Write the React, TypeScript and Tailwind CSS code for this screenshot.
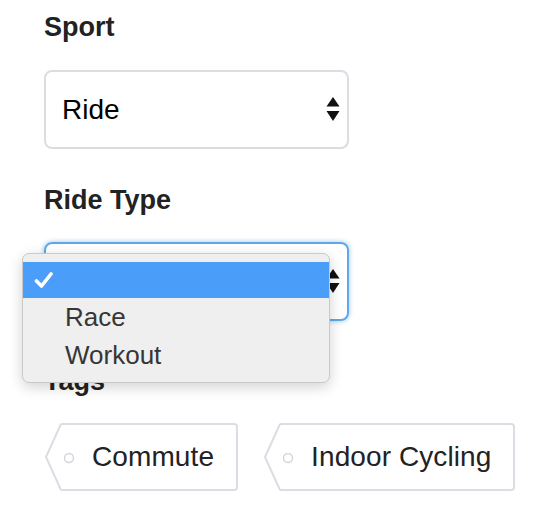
import React from 'react';

const font = { fontFamily: '"Liberation Sans", Arial, sans-serif' };

// Native-looking up/down select arrows
const SelectArrows: React.FC = () => (
  <svg width="14" height="25" viewBox="0 0 14 25" className="shrink-0">
    <path d="M7 0 L13.5 9.5 H0.5 Z" fill="#111" />
    <path d="M0.5 14 H13.5 L7 24 Z" fill="#111" />
  </svg>
);

const TagChip: React.FC<{ label: string }> = ({ label }) => (
  <div className="flex h-[68px] items-stretch">
    <svg width="18" height="68" viewBox="0 0 18 68" className="shrink-0">
      <path d="M18 1 H17 Q16 1 15.5 2 L1 34 L15.5 66 Q16 67 17 67 H18" fill="none" stroke="#dcdce4" strokeWidth="2" />
    </svg>
    <div className="relative flex items-center rounded-r-[4px] border-y-2 border-r-2 border-[#dcdce4] pl-[29px] pr-[22px] text-[28px] tracking-[0.1px] text-[#222]">
      <svg width="12" height="12" viewBox="0 0 12 12" className="absolute left-[1px] top-[28px]">
        <circle cx="5" cy="5" r="4.5" fill="none" stroke="#d6d6de" strokeWidth="1.5" />
      </svg>
      {label}
    </div>
  </div>
);

const App: React.FC = () => {
  return (
    <div className="min-h-[520px] w-[556px] bg-white pl-[44px] pt-[12px]" style={font}>
      {/* Sport */}
      <label className="block text-[27px] font-bold leading-[30px] text-[#222]">Sport</label>
      <div className="mt-[28px] flex h-[79px] w-[305px] items-center justify-between rounded-[8px] border-2 border-[#dcdce3] pl-[16px] pr-[7px] text-[28px] text-black">
        <span>Ride</span>
        <SelectArrows />
      </div>

      {/* Ride Type */}
      <label className="mt-[36px] block text-[27px] font-bold leading-[30px] text-[#222]">Ride Type</label>
      <div className="relative mt-[27px] h-[79px] w-[305px]">
        <div className="flex h-full w-full items-center justify-end rounded-[8px] border-2 border-[#62a6e8] pr-[7px] shadow-[0_0_4px_1px_rgba(98,166,232,0.45)]">
          <SelectArrows />
        </div>

        {/* open options menu */}
        <div className="absolute -left-[22px] top-[11px] z-10 w-[308px] rounded-[7px] border border-[#c9c9c9] bg-[#efefef] pb-[8px] pt-[8px] text-[26px] text-[#363636] shadow-[0_4px_14px_rgba(0,0,0,0.18)]">
          <div className="flex h-[36px] items-center bg-[#4b9dfa] pl-[11px]">
            <svg width="20" height="18" viewBox="0 0 20 18">
              <path d="M2.5 10 L7.5 15 L17 3" fill="none" stroke="#fff" strokeWidth="3.6" strokeLinecap="round" strokeLinejoin="round" />
            </svg>
          </div>
          <div className="flex h-[38px] items-center pl-[42px]">Race</div>
          <div className="flex h-[38px] items-center pl-[42px]">Workout</div>
        </div>
      </div>

      {/* Tags */}
      <label className="mt-[45px] block text-[27px] font-bold leading-[30px] text-[#222]">Tags</label>
      <div className="mt-[27px] flex gap-[26px] pl-[1px]">
        <TagChip label="Commute" />
        <TagChip label="Indoor Cycling" />
      </div>
    </div>
  );
};

export default App;
